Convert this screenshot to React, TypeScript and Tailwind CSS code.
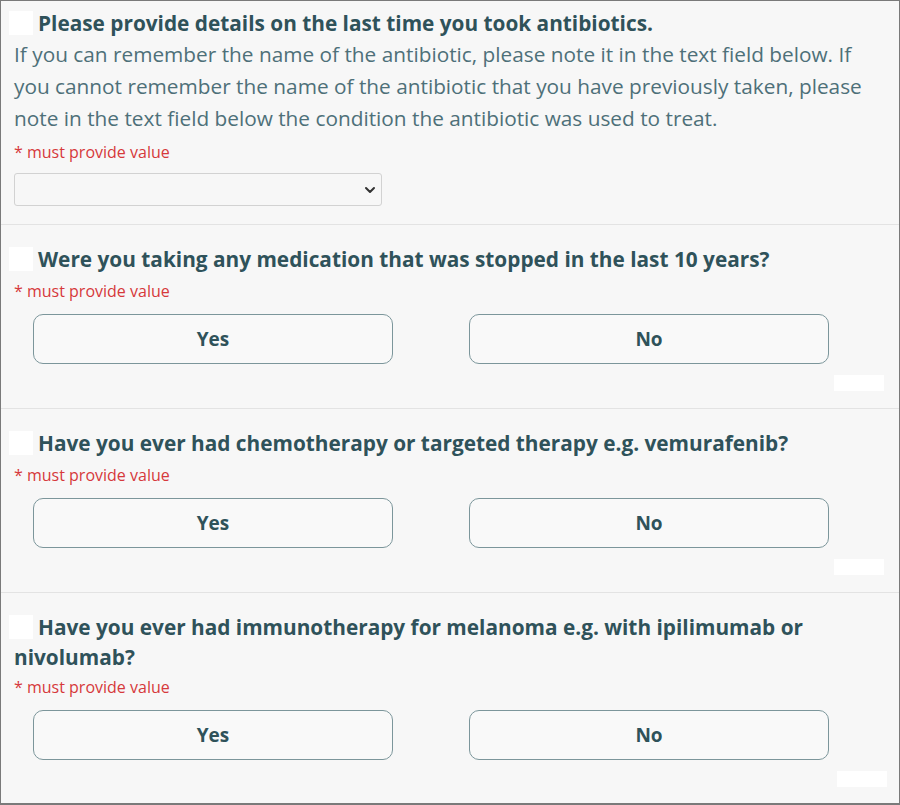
import React from 'react';

const font = { fontFamily: '"Open Sans", "Noto Sans", sans-serif' };

const Box: React.FC = () => (
  <span className="inline-block w-6 h-6 bg-white align-middle ml-[-5px] mr-[5px] relative top-[-2px]" />
);

const Required: React.FC<{ className?: string }> = ({ className = '' }) => (
  <div className={`text-[16px] leading-5 text-[#d6393b] ${className}`}>* must provide value</div>
);

const YesNo: React.FC<{ rectRight: string }> = ({ rectRight }) => (
  <>
    <div className="grid grid-cols-2 px-[13px] mt-[13px]">
      {['Yes', 'No'].map((label) => (
        <button
          key={label}
          className="ml-[19px] w-[360px] h-[50px] rounded-[10px] border-[1.5px] border-[#7c969b] bg-[#f9f9f9] text-[19px] font-bold text-[#2f525a]"
        >
          {label}
        </button>
      ))}
    </div>
    <div className="flex justify-end mt-[11px]">
      <div className={`w-[50px] h-4 bg-white ${rectRight}`} />
    </div>
  </>
);

const Question: React.FC<{ title: string; last?: boolean; rectRight: string; mustGap: string }> = ({
  title,
  last,
  rectRight,
  mustGap,
}) => (
  <section className={`pt-[19px] ${last ? 'pb-[16px]' : 'pb-[17px] border-b border-[#e3e3e3]'}`}>
    <h2 className="px-[13px] text-[20.8px] leading-[30px] font-bold text-[#2f525a]">
      <Box />
      {title}
    </h2>
    <div className="px-[13px]">
      <Required className={mustGap} />
    </div>
    <YesNo rectRight={rectRight} />
  </section>
);

export default function App() {
  return (
    <div className="w-[900px] h-[805px] bg-[#f7f7f7] border border-[#7a7a7a] border-b-2 overflow-hidden" style={font}>
      <section className="pt-[7px] pb-[18px] border-b border-[#e3e3e3]">
        <div className="px-[13px]">
          <h2 className="text-[20.8px] leading-[30px] font-bold text-[#2f525a]">
            <Box />
            Please provide details on the last time you took antibiotics.
          </h2>
          <p className="text-[20.8px] leading-[32px] text-[#4e7079]">
            If you can remember the name of the antibiotic, please note it in the text field below. If you cannot
            remember the name of the antibiotic that you have previously taken, please note in the text field below the
            condition the antibiotic was used to treat.
          </p>
          <Required className="mt-2" />
          <div className="mt-[11px] w-[368px] h-[33px] rounded-[3px] border border-[#d2d2d2] bg-[#f7f7f7] flex items-center justify-end pr-[5px]">
            <svg width="12" height="8" viewBox="0 0 12 8" fill="none">
              <path d="M2 2l4 4 4-4" stroke="#333" strokeWidth="2" strokeLinecap="round" strokeLinejoin="round" />
            </svg>
          </div>
        </div>
      </section>
      <Question
        title="Were you taking any medication that was stopped in the last 10 years?"
        rectRight="mr-[15px]"
        mustGap="mt-[7px]"
      />
      <Question
        title="Have you ever had chemotherapy or targeted therapy e.g. vemurafenib?"
        rectRight="mr-[15px]"
        mustGap="mt-[7px]"
      />
      <Question
        title="Have you ever had immunotherapy for melanoma e.g. with ipilimumab or nivolumab?"
        rectRight="mr-[12px]"
        mustGap="mt-[5px]"
        last
      />
    </div>
  );
}
